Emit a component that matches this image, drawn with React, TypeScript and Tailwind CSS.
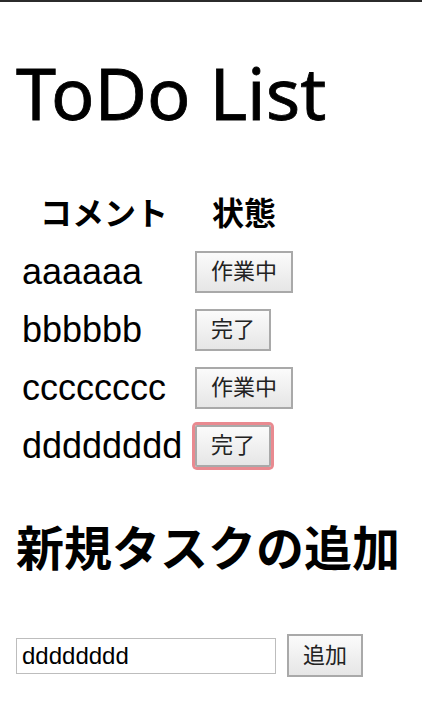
import { useState } from "react";

type Todo = {
  comment: string;
  status: "作業中" | "完了";
};

const initialTodos: Todo[] = [
  { comment: "aaaaaa", status: "作業中" },
  { comment: "bbbbbb", status: "完了" },
  { comment: "cccccccc", status: "作業中" },
  { comment: "dddddddd", status: "完了" },
];

export default function App() {
  const [todos, setTodos] = useState<Todo[]>(initialTodos);
  const [comment, setComment] = useState("dddddddd");

  const toggleStatus = (index: number) => {
    setTodos(
      todos.map((todo, i) =>
        i === index ? { ...todo, status: todo.status === "作業中" ? "完了" : "作業中" } : todo
      )
    );
  };

  const addTodo = () => {
    if (!comment) return;
    setTodos([...todos, { comment, status: "作業中" }]);
    setComment("");
  };

  return (
    <div className="min-h-[712px] bg-white text-black font-['Liberation_Sans','Noto_Sans_CJK_JP',sans-serif]">
      {/* browser chrome edge */}
      <div className="h-[2px] bg-[#2b2b2b]" />

      <h1 className="ml-4 mt-[54px] text-[72px] leading-[72px] font-normal font-['Noto_Sans','Liberation_Sans',sans-serif] [-webkit-text-stroke:0.8px_black]">
        ToDo List
      </h1>

      <table className="ml-4 mt-[57px] border-separate border-spacing-0">
        <thead>
          <tr className="h-[58px]">
            <th className="w-[176px] p-0 text-[32px] font-bold">コメント</th>
            <th className="w-[104px] p-0 text-[32px] font-bold">状態</th>
          </tr>
        </thead>
        <tbody>
          {todos.map((todo, i) => (
            <tr key={i} className="h-[58px]">
              <td className="p-0 pl-[6px] align-middle text-[36px] leading-none">{todo.comment}</td>
              <td className="p-0 pl-[3px] align-middle">
                <button
                  onClick={() => toggleStatus(i)}
                  className={`h-[42px] px-[14px] border-2 border-[#a9a9a9] bg-gradient-to-b from-[#fbfbfb] to-[#e6e6e6] text-[22px] leading-none text-[#222] ${
                    i === todos.length - 1 ? "ring-[3px] ring-[#e98a90] rounded-[2px]" : ""
                  }`}
                >
                  {todo.status}
                </button>
              </td>
            </tr>
          ))}
        </tbody>
      </table>

      <h2 className="ml-4 mt-[51px] text-[48px] leading-[48px] font-bold">新規タスクの追加</h2>

      <div className="ml-4 mt-[60px] flex items-center gap-[11px]">
        <input
          value={comment}
          onChange={(e) => setComment(e.target.value)}
          className="w-[260px] h-[36px] border border-[#bdbdbd] px-[5px] text-[24px] outline-none"
        />
        <button
          onClick={addTodo}
          className="w-[76px] h-[43px] border-2 border-[#a9a9a9] bg-gradient-to-b from-[#fbfbfb] to-[#e6e6e6] text-[22px] leading-none text-[#222]"
        >
          追加
        </button>
      </div>
    </div>
  );
}
